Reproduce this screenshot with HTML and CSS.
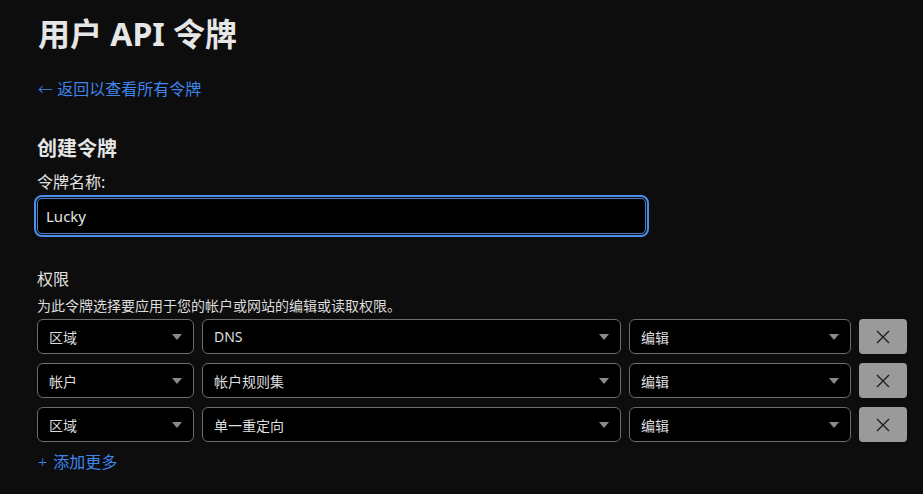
FILE: index.html
```html
<!DOCTYPE html>
<html lang="zh-CN">
<head>
<meta charset="utf-8">
<title>用户 API 令牌</title>
<link rel="stylesheet" href="styles.css">
</head>
<body>
<main class="page">
  <h1 class="title">用户 API 令牌</h1>
  <a class="back-link" href="#"><span class="arrow">←</span> 返回以查看所有令牌</a>

  <h2 class="section-title">创建令牌</h2>
  <label class="field-label" for="token-name">令牌名称:</label>
  <input class="text-input" id="token-name" type="text" value="Lucky">

  <div class="perm-title">权限</div>
  <p class="perm-desc">为此令牌选择要应用于您的帐户或网站的编辑或读取权限。</p>

  <div class="perm-rows">
    <div class="perm-row">
      <div class="select"><span>区域</span><i class="caret"></i></div>
      <div class="select"><span>DNS</span><i class="caret"></i></div>
      <div class="select"><span>编辑</span><i class="caret"></i></div>
      <button class="remove" type="button" aria-label="删除"><svg width="14" height="14" viewBox="0 0 14 14"><path d="M1 1L13 13M13 1L1 13" stroke="#1e1e1e" stroke-width="1.4" fill="none"/></svg></button>
    </div>
    <div class="perm-row">
      <div class="select"><span>帐户</span><i class="caret"></i></div>
      <div class="select"><span>帐户规则集</span><i class="caret"></i></div>
      <div class="select"><span>编辑</span><i class="caret"></i></div>
      <button class="remove" type="button" aria-label="删除"><svg width="14" height="14" viewBox="0 0 14 14"><path d="M1 1L13 13M13 1L1 13" stroke="#1e1e1e" stroke-width="1.4" fill="none"/></svg></button>
    </div>
    <div class="perm-row">
      <div class="select"><span>区域</span><i class="caret"></i></div>
      <div class="select"><span>单一重定向</span><i class="caret"></i></div>
      <div class="select"><span>编辑</span><i class="caret"></i></div>
      <button class="remove" type="button" aria-label="删除"><svg width="14" height="14" viewBox="0 0 14 14"><path d="M1 1L13 13M13 1L1 13" stroke="#1e1e1e" stroke-width="1.4" fill="none"/></svg></button>
    </div>
  </div>

  <a class="add-more" href="#"><span class="plus">+</span> 添加更多</a>
</main>
</body>
</html>
```

FILE: styles.css
```css
html, body {
  margin: 0;
  padding: 0;
  background: #0d0d0d;
}

body {
  font-family: "Noto Sans", "Noto Sans CJK SC", sans-serif;
  color: #e2e2e2;
}

.page {
  padding: 16px 0 0 37px;
}

.title {
  margin: 0;
  font-size: 32px;
  line-height: 36px;
  font-weight: 700;
  color: #e6e6e6;
  padding-left: 1px;
}

.back-link {
  display: block;
  margin-top: 27px;
  font-size: 16px;
  line-height: 20px;
  color: #3f85ee;
  text-decoration: none;
  padding-left: 1px;
}

.back-link .arrow {
  font-size: 15px;
  font-weight: 300;
}

.section-title {
  margin: 37px 0 0;
  font-size: 20px;
  line-height: 26px;
  font-weight: 700;
  color: #e6e6e6;
}

.field-label {
  display: block;
  margin-top: 10px;
  font-size: 16px;
  line-height: 20px;
}

.text-input {
  display: block;
  box-sizing: border-box;
  margin-top: 6px;
  width: 609px;
  height: 36px;
  padding: 0 8px;
  background: #000;
  color: #e6e6e6;
  border: 1px solid #4b7fc8;
  border-radius: 5px;
  outline: 2px solid #4a8ee8;
  outline-offset: 1px;
  font-family: "Noto Sans", "Noto Sans CJK SC", sans-serif;
  font-size: 15px;
}

.perm-title {
  margin-top: 35px;
  font-size: 16px;
  line-height: 20px;
}

.perm-desc {
  margin: 8px 0 0;
  font-size: 14px;
  line-height: 18px;
  color: #dcdcdc;
}

.perm-rows {
  margin-top: 4px;
  display: flex;
  flex-direction: column;
  gap: 9px;
}

.perm-row {
  display: grid;
  grid-template-columns: 157px 419px 222px 48px;
  gap: 8px;
  height: 35px;
}

.select {
  box-sizing: border-box;
  display: flex;
  align-items: center;
  justify-content: space-between;
  padding: 0 11px 0 11px;
  background: #000;
  border: 1px solid #6c6c6c;
  border-radius: 6px;
  font-size: 14px;
  color: #dedede;
}

.caret {
  width: 0;
  height: 0;
  border-left: 5px solid transparent;
  border-right: 5px solid transparent;
  border-top: 6px solid #8a8a8a;
  margin-top: 1px;
}

.remove {
  display: flex;
  align-items: center;
  justify-content: center;
  padding: 0;
  background: #9a9a9a;
  border: none;
  border-radius: 4px;
  cursor: pointer;
}

.add-more {
  display: block;
  margin-top: 10px;
  font-size: 16px;
  line-height: 20px;
  color: #3f85ee;
  text-decoration: none;
  padding-left: 1px;
}

.add-more .plus {
  font-weight: 300;
  margin-right: 2px;
}
```
